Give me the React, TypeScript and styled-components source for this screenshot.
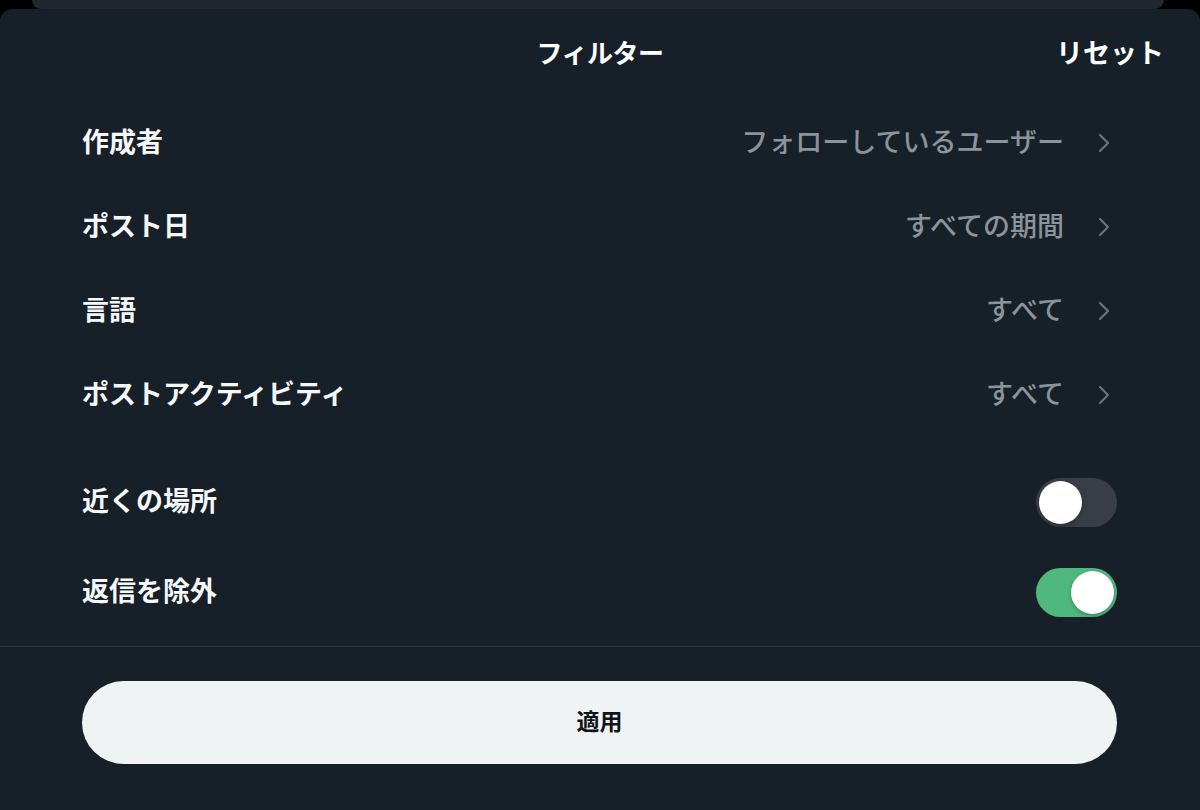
import React, { useState } from 'react'
import styled, { createGlobalStyle } from 'styled-components'

const GlobalStyle = createGlobalStyle`
  html, body {
    margin: 0;
    padding: 0;
    background: #000;
  }
  body {
    font-family: "Noto Sans CJK JP", "Noto Sans", sans-serif;
    -webkit-font-smoothing: antialiased;
  }
`

interface NavItem {
  label: string
  value: string
}

const navItems: NavItem[] = [
  { label: '作成者', value: 'フォローしているユーザー' },
  { label: 'ポスト日', value: 'すべての期間' },
  { label: '言語', value: 'すべて' },
  { label: 'ポストアクティビティ', value: 'すべて' },
]

const Chevron: React.FC = () => (
  <ChevronSvg viewBox="0 0 12 20" width="12" height="20">
    <path d="M2 2 L10 10 L2 18" fill="none" stroke="currentColor" strokeWidth="2.2" strokeLinecap="round" strokeLinejoin="round" />
  </ChevronSvg>
)

const App: React.FC = () => {
  const [nearby, setNearby] = useState(false)
  const [noReplies, setNoReplies] = useState(true)

  return (
    <Page>
      <GlobalStyle />
      <BackCard />
      <Sheet>
        <Header>
          <Title>フィルター</Title>
          <ResetButton>リセット</ResetButton>
        </Header>

        <List>
          {navItems.map((item) => (
            <NavRow key={item.label}>
              <Label>{item.label}</Label>
              <Value>{item.value}</Value>
              <Chevron />
            </NavRow>
          ))}
        </List>

        <Toggles>
          <ToggleRow>
            <Label>近くの場所</Label>
            <Switch on={nearby} onClick={() => setNearby(!nearby)}>
              <Knob on={nearby} />
            </Switch>
          </ToggleRow>
          <ToggleRow>
            <Label>返信を除外</Label>
            <Switch on={noReplies} onClick={() => setNoReplies(!noReplies)}>
              <Knob on={noReplies} />
            </Switch>
          </ToggleRow>
        </Toggles>

        <Footer>
          <ApplyButton>
            <ButtonText>適用</ButtonText>
          </ApplyButton>
        </Footer>
      </Sheet>
    </Page>
  )
}

const Page = styled.div`
  width: 1200px;
  height: 810px;
  display: flex;
  flex-direction: column;
  overflow: hidden;
`

const BackCard = styled.div`
  height: 9px;
  margin: 0 36px 0 32px;
  background: #22272f;
  border-radius: 0 0 10px 10px;
`

const Sheet = styled.div`
  flex: 1;
  background: #171f29;
  border-radius: 12px 12px 0 0;
  display: flex;
  flex-direction: column;
`

const Header = styled.div`
  height: 88px;
  position: relative;
  display: flex;
  align-items: center;
  justify-content: center;
`

const Title = styled.div`
  color: #ffffff;
  font-size: 26px;
  font-weight: 700;
  letter-spacing: -0.5px;
  padding-bottom: 4px;
`

const ResetButton = styled.div`
  position: absolute;
  right: 36px;
  top: 0;
  height: 88px;
  padding-bottom: 4px;
  box-sizing: border-box;
  display: flex;
  align-items: center;
  color: #ffffff;
  font-size: 27px;
  font-weight: 700;
`

const List = styled.div`
  padding-top: 4px;
  display: flex;
  flex-direction: column;
`

const NavRow = styled.div`
  height: 84px;
  display: flex;
  align-items: center;
  padding: 0 90px 0 82px;
`

const Label = styled.div`
  flex: 1;
  color: #f5f7f8;
  font-size: 27px;
  font-weight: 700;
  padding-bottom: 6px;
`

const Value = styled.div`
  color: #8c939b;
  font-size: 27px;
  font-weight: 500;
  margin-right: 34px;
  padding-bottom: 6px;
`

const ChevronSvg = styled.svg`
  color: #6b737c;
  display: block;
`

const Toggles = styled.div`
  padding-top: 20px;
  padding-bottom: 9px;
  border-bottom: 1px solid #2c333d;
  display: flex;
  flex-direction: column;
`

const ToggleRow = styled.div`
  height: 90px;
  display: flex;
  align-items: center;
  padding: 0 83px 0 82px;
`

const Switch = styled.div<{ on: boolean }>`
  width: 81px;
  height: 49px;
  border-radius: 25px;
  background: ${(p) => (p.on ? '#4fb87c' : '#393d46')};
  display: flex;
  align-items: center;
  justify-content: ${(p) => (p.on ? 'flex-end' : 'flex-start')};
  padding: 0 3px;
  box-sizing: border-box;
  cursor: pointer;
`

const Knob = styled.div<{ on: boolean }>`
  width: 43px;
  height: 43px;
  border-radius: 50%;
  background: #ffffff;
  box-shadow: 0 2px 4px rgba(0, 0, 0, 0.25);
`

const Footer = styled.div`
  padding: 34px 83px 0 82px;
`

const ApplyButton = styled.button`
  width: 100%;
  height: 83px;
  border: none;
  border-radius: 42px;
  background: #eff3f4;
  display: flex;
  align-items: center;
  justify-content: center;
  cursor: pointer;
`

const ButtonText = styled.span`
  color: #0f1419;
  font-family: "Noto Sans CJK JP", "Noto Sans", sans-serif;
  font-size: 23px;
  font-weight: 700;
  padding-bottom: 5px;
`

export default App
